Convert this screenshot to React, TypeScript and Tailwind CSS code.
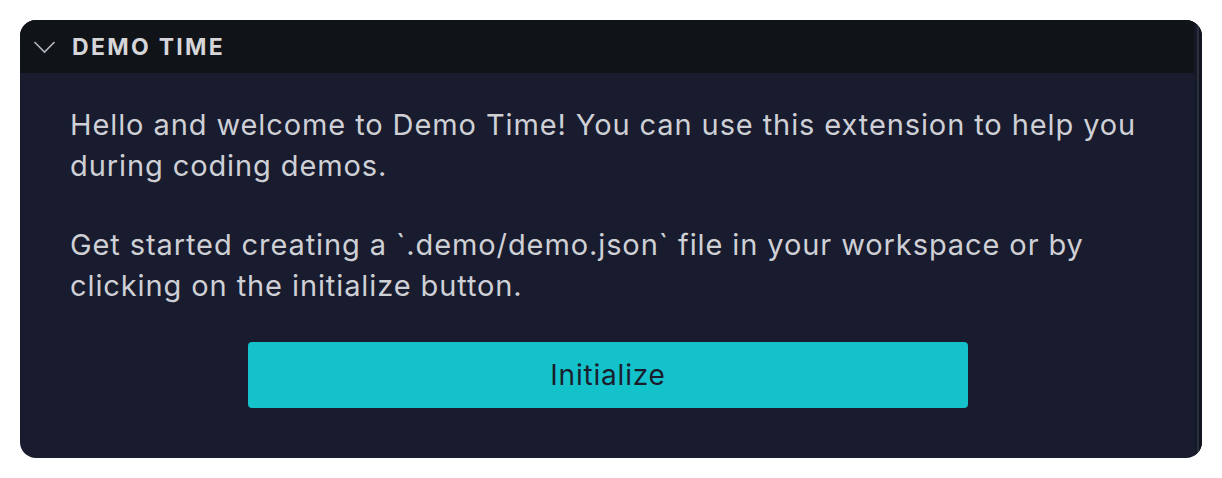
import React from "react";

export default function App() {
  return (
    <div className="w-[1222px] h-[478px] bg-white pt-[20px] pl-[20px]" style={{ fontFamily: "Inter, 'Liberation Sans', sans-serif" }}>
      <div className="w-[1182px] h-[438px] rounded-[16px] overflow-hidden bg-[#181c2e] flex">
        <div className="flex-1 flex flex-col">
          <div className="h-[53px] bg-[#101418] flex items-center pl-[13px] shrink-0">
            <svg width="24" height="14" viewBox="0 0 24 14" className="text-[#b4b6bc]">
              <path d="M1.5 2 L11.5 12 L21.5 2" fill="none" stroke="currentColor" strokeWidth="1.6" />
            </svg>
            <span className="ml-[15px] mt-[1px] text-[23px] font-bold text-[#d6d6da] tracking-[2.3px]">DEMO TIME</span>
          </div>
          <div className="pl-[50px] pr-[40px] pt-[31px] text-[29px] leading-[41px] tracking-[0.9px] text-[#cfd0d6]">
            <p>Hello and welcome to Demo Time! You can use this extension to help you during coding demos.</p>
            <p className="mt-[38px]">Get started creating a `.demo/demo.json` file in your workspace or by clicking on the initialize button.</p>
            <div className="flex justify-center mt-[36px] pr-[8px]">
              <button className="w-[720px] h-[66px] rounded-[4px] bg-[#14c2cc] text-[#1a1e2c] text-[28px] tracking-[0.8px]">Initialize</button>
            </div>
          </div>
        </div>
        <div className="w-[8px] flex shrink-0">
          <div className="w-[3px] bg-[#151928]" />
          <div className="w-[2px] bg-[#2a2f3d]" />
          <div className="w-[3px] bg-[#12151f]" />
        </div>
      </div>
    </div>
  );
}
